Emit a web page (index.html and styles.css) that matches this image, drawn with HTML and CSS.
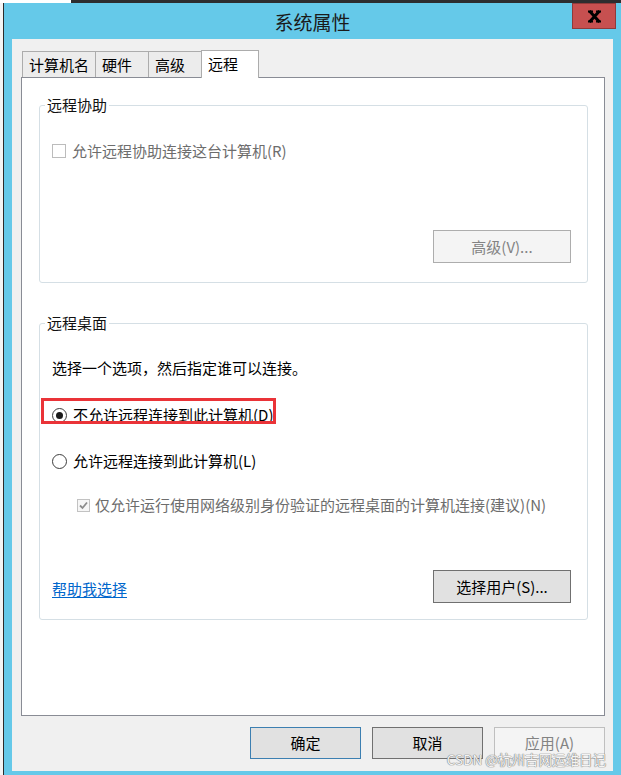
FILE: index.html
```html
<!DOCTYPE html>
<html lang="zh-CN">
<head>
<meta charset="utf-8">
<title>系统属性</title>
<link rel="stylesheet" href="styles.css">
</head>
<body>
<div class="screen">
  <div class="topstrip"></div>
  <div class="main">
    <div class="desk"></div>
    <div class="window">
      <div class="titlebar">
        <span></span>
        <div class="title">系统属性</div>
        <div class="close-wrap">
          <div class="close">
            <svg width="13" height="13" viewBox="0 0 13 13">
              <path d="M1.5 1 L11.5 12 M11.5 1 L1.5 12" stroke="#000" stroke-width="3" fill="none"/>
              <path d="M0 1.5 H5 M8 1.5 H13 M0 11.5 H5 M8 11.5 H13" stroke="#000" stroke-width="2" fill="none"/>
            </svg>
          </div>
        </div>
      </div>
      <div class="body">
        <div class="tabs">
          <div class="tab">计算机名</div>
          <div class="tab">硬件</div>
          <div class="tab">高级</div>
          <div class="tab active">远程</div>
        </div>
        <div class="panel">
          <fieldset class="group g1">
            <legend>远程协助</legend>
            <div class="row r-assist disabled">
              <span class="cb"></span>
              <span class="label">允许远程协助连接这台计算机(R)</span>
            </div>
            <div class="btnrow r-adv">
              <div class="btn dis">高级(V)...</div>
            </div>
          </fieldset>
          <fieldset class="group g2">
            <legend>远程桌面</legend>
            <div class="row r-intro">选择一个选项，然后指定谁可以连接。</div>
            <div class="row r-radio1 marked">
              <span class="radio on"></span>
              <span class="label">不允许远程连接到此计算机(D)</span>
            </div>
            <div class="row r-radio2">
              <span class="radio"></span>
              <span class="label">允许远程连接到此计算机(L)</span>
            </div>
            <div class="row r-nla disabled">
              <span class="cb checked">
                <svg width="11" height="11" viewBox="0 0 11 11"><path d="M2 5.5 L4.5 8 L9 2.5" stroke="#8c8c8c" stroke-width="1.8" fill="none"/></svg>
              </span>
              <span class="label">仅允许运行使用网络级别身份验证的远程桌面的计算机连接(建议)(N)</span>
            </div>
            <div class="btnrow r-users">
              <span class="link">帮助我选择</span>
              <div class="btn">选择用户(S)...</div>
            </div>
          </fieldset>
        </div>
        <div class="footer">
          <div class="btn fbtn default">确定</div>
          <div class="btn fbtn">取消</div>
          <div class="btn fbtn dis">应用(A)</div>
        </div>
      </div>
    </div>
  </div>
  <div class="watermark">CSDN @杭州吉网运维日记</div>
</div>
</body>
</html>
```

FILE: styles.css
```css
html, body {
  margin: 0;
  padding: 0;
}
body {
  width: 621px;
  height: 775px;
  overflow: hidden;
  background: #ffffff;
  font-family: "Noto Sans CJK SC", "Microsoft YaHei", sans-serif;
  color: #000;
}
.screen {
  position: relative;
  width: 621px;
  height: 775px;
  display: flex;
  flex-direction: column;
}
.topstrip {
  flex: none;
  height: 3px;
  margin-left: 71px;
  background: #2d2d2f;
}
.main {
  flex: 1;
  display: flex;
  min-height: 0;
}
.desk {
  width: 3px;
  background: #f4f4f4;
}
.window {
  flex: 1;
  border-left: 1px solid #2b2b2b;
  background: #65c9e9;
  display: flex;
  flex-direction: column;
}
.titlebar {
  flex: none;
  height: 36px;
  display: grid;
  grid-template-columns: 1fr auto 1fr;
}
.title {
  font-size: 19px;
  line-height: 36px;
  color: #1a1a1a;
  padding-top: 1px;
}
.close-wrap {
  display: flex;
  justify-content: flex-end;
  align-items: flex-start;
  padding-right: 5px;
}
.close {
  width: 44px;
  height: 26px;
  box-sizing: border-box;
  background: #c75050;
  border: 1px solid #8f3a3a;
  display: flex;
  align-items: center;
  justify-content: center;
}
.body {
  flex: 1;
  margin: 0 8px 4px 8px;
  background: #f0f0f0;
  padding: 11px 8px 12px 9px;
  display: flex;
  flex-direction: column;
}
.tabs {
  position: relative;
  z-index: 1;
  flex: none;
  height: 27px;
  display: flex;
  align-items: flex-end;
  padding-left: 1px;
}
.tab {
  box-sizing: border-box;
  height: 26px;
  min-width: 54px;
  padding: 0 6px;
  border: 1px solid #acacac;
  border-bottom: none;
  background: #ececec;
  font-size: 15px;
  line-height: 25px;
  margin-left: -1px;
}
.tab:first-child {
  margin-left: 0;
}
.tab.active {
  height: 28px;
  min-width: 58px;
  margin-bottom: -1px;
  background: #ffffff;
  line-height: 25px;
}
.panel {
  flex: 1;
  border: 1px solid #898c95;
  background: #ffffff;
  padding: 17px 16px 0 17px;
  display: flex;
  flex-direction: column;
}
.group {
  margin: 0;
  min-width: 0;
  border: 1px solid #d5dfe5;
  border-radius: 3px;
  padding: 0 16px 0 12px;
}
.group legend {
  font-size: 15px;
  line-height: 20px;
  padding: 0 2px;
  margin-left: -7px;
  color: #111;
}
.g1 {
  padding-bottom: 19px;
}
.g2 {
  margin-top: 30px;
  padding-bottom: 16px;
}
.row {
  position: relative;
  display: flex;
  align-items: center;
  height: 20px;
  font-size: 15px;
  line-height: 20px;
  white-space: nowrap;
}
.row.disabled {
  color: #6d6d6d;
}
.r-assist { margin-top: 26px; }
.r-intro { margin-top: 25px; }
.r-radio1 { margin-top: 27px; }
.r-radio2 { margin-top: 26px; }
.r-nla { margin-top: 24px; padding-left: 25px; }
.cb {
  box-sizing: border-box;
  width: 14px;
  height: 14px;
  border: 1px solid #bcbcbc;
  background: #ffffff;
  margin-right: 6px;
  display: flex;
  align-items: center;
  justify-content: center;
}
.cb.checked {
  width: 13px;
  height: 13px;
  border-color: #c2c2c2;
  background: #f6f6f6;
  margin-right: 5px;
}
.radio {
  box-sizing: border-box;
  width: 15px;
  height: 15px;
  border: 1px solid #3d3d3d;
  border-radius: 50%;
  background: #ffffff;
  margin-right: 6px;
  display: flex;
  align-items: center;
  justify-content: center;
}
.radio.on::after {
  content: "";
  width: 7px;
  height: 7px;
  border-radius: 50%;
  background: #1a1a1a;
}
.marked::before {
  content: "";
  position: absolute;
  left: -11px;
  top: -7px;
  width: 235px;
  height: 26px;
  box-sizing: border-box;
  border: 3px solid #ea3338;
  pointer-events: none;
}
.btnrow {
  display: flex;
  align-items: center;
  justify-content: flex-end;
}
.r-adv { margin-top: 69px; }
.r-users {
  margin-top: 55px;
  justify-content: space-between;
}
.link {
  font-size: 15px;
  line-height: 20px;
  color: #0066cc;
  text-decoration: underline;
  text-underline-offset: 2px;
  margin-top: 5px;
}
.btn {
  box-sizing: border-box;
  width: 138px;
  height: 33px;
  border: 1px solid #707070;
  background: #e1e1e1;
  font-size: 15px;
  line-height: 31px;
  text-align: center;
  color: #000;
}
.btn.dis {
  border-color: #adadad;
  background: #f4f4f4;
  color: #838383;
}
.footer {
  flex: none;
  margin-top: 11px;
  display: flex;
  justify-content: flex-end;
  gap: 11px;
}
.fbtn {
  width: 111px;
  height: 32px;
  line-height: 30px;
}
.fbtn.default {
  border-color: #3c7fb1;
}
.fbtn.dis {
  border-color: #bfbfbf;
}
.watermark {
  position: absolute;
  right: 15px;
  top: 749px;
  font-size: 13.5px;
  line-height: 20px;
  color: #f4f4f4;
  text-shadow: 0 0 1px #808080, 0 0 1px #808080, 0 0 1px #909090;
  white-space: nowrap;
}
```
